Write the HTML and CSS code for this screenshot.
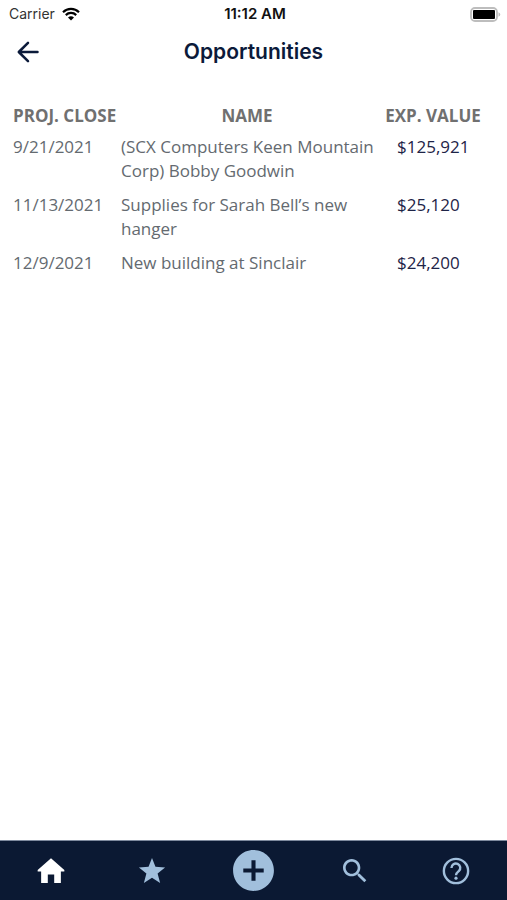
FILE: index.html
```html
<!DOCTYPE html>
<html lang="en">
<head>
<meta charset="utf-8">
<meta name="viewport" content="width=device-width, initial-scale=1">
<title>Opportunities</title>
<link rel="stylesheet" href="styles.css">
</head>
<body>
<div class="status">
  <div class="carrier">
    <span>Carrier</span>
    <svg class="wifi" viewBox="0 0 18 14" aria-hidden="true">
      <path d="M1 5.2a11.5 11.5 0 0 1 16 0M3.8 8.1a7.4 7.4 0 0 1 10.4 0" fill="none" stroke="currentColor" stroke-width="2.2"/>
      <path d="M9 13.6 6 10.6a4.3 4.3 0 0 1 6 0z" fill="currentColor"/>
    </svg>
  </div>
  <time class="clock">11:12 AM</time>
  <svg class="battery" viewBox="0 0 31 15" aria-hidden="true">
    <rect x="1" y="1" width="26" height="13" rx="4" fill="#fff" stroke="#bdbdbd" stroke-width="1.8"/>
    <rect x="3" y="3" width="22" height="9" rx="1" fill="#000"/>
    <path d="M28.5 5.2c2.4 1.2 2.4 3.4 0 4.6z" fill="#bdbdbd"/>
  </svg>
</div>
<header class="header">
  <button class="back" type="button" aria-label="Back">
    <svg viewBox="0 0 24 24" aria-hidden="true"><path d="M21.5 12H3M12 2.8 2.8 12l9.2 9.2" fill="none" stroke="currentColor" stroke-width="2.5" stroke-linecap="round" stroke-linejoin="round"/></svg>
  </button>
  <h1 class="title">Opportunities</h1>
</header>
<main class="content">
  <table class="deals">
    <colgroup><col class="col-date"><col><col class="col-value"></colgroup>
    <thead>
      <tr><th class="date" scope="col">PROJ. CLOSE</th><th class="name" scope="col">NAME</th><th scope="col">EXP. VALUE</th></tr>
    </thead>
    <tbody>
      <tr><td>9/21/2021</td><td>(SCX Computers Keen Mountain Corp) Bobby Goodwin</td><td class="value">$125,921</td></tr>
      <tr><td>11/13/2021</td><td>Supplies for Sarah Bell’s new hanger</td><td class="value">$25,120</td></tr>
      <tr><td>12/9/2021</td><td>New building at Sinclair</td><td class="value">$24,200</td></tr>
    </tbody>
  </table>
</main>
<nav class="tabs">
  <a class="tab active" href="#home" aria-label="Home"><svg viewBox="0 0 24 24"><path d="M12 2.4 2 11.2v1.2h2.6V21h5v-6.4h4.8V21h5v-8.6H22v-1.2z"/></svg></a>
  <a class="tab" href="#favorites" aria-label="Favorites"><svg viewBox="0 0 24 24"><path d="M12 2.2l2.6 6.7 7.2.4-5.6 4.6 1.9 7.1-6.1-4-6.1 4 1.9-7.1-5.6-4.6 7.2-.4z"/></svg></a>
  <a class="tab add" href="#add" aria-label="Add"><svg viewBox="0 0 24 24"><path d="M12 2C6.48 2 2 6.48 2 12s4.48 10 10 10 10-4.48 10-10S17.52 2 12 2zm5 11h-4v4h-2v-4H7v-2h4V7h2v4h4v2z"/></svg></a>
  <a class="tab" href="#search" aria-label="Search"><svg viewBox="0 0 24 24"><path d="M15.5 14h-.79l-.28-.27C15.41 12.59 16 11.11 16 9.5 16 5.91 13.09 3 9.5 3S3 5.91 3 9.5 5.91 16 9.5 16c1.61 0 3.09-.59 4.23-1.57l.27.28v.79l5 4.99L20.49 19l-4.99-5zm-6 0C7.01 14 5 11.99 5 9.5S7.01 5 9.5 5 14 7.01 14 9.5 11.99 14 9.5 14z"/></svg></a>
  <a class="tab" href="#help" aria-label="Help"><svg viewBox="0 0 24 24"><circle cx="12" cy="12" r="9.1" fill="none" stroke="currentColor" stroke-width="1.8"/><path d="M8.6 9.7a3.3 3.3 0 1 1 5.5 2.4c-1.1 1-2.1 1.4-2.1 3" fill="none" stroke="currentColor" stroke-width="1.8"/><circle cx="12" cy="17.4" r="1.2"/></svg></a>
</nav>
</body>
</html>
```
FILE: styles.css
```css
* {
  box-sizing: border-box;
}

body {
  margin: 0;
  min-height: 100vh;
  display: flex;
  flex-direction: column;
  background: #fff;
  color: #646a70;
  font-family: "Open Sans", sans-serif;
  font-size: 17px;
  line-height: 24px;
}

.status {
  display: grid;
  grid-template-columns: 1fr auto 1fr;
  align-items: center;
  height: 28px;
  padding: 0 6px 0 9px;
  color: #111;
  font-family: Inter, sans-serif;
  font-size: 14px;
}

.carrier {
  display: flex;
  align-items: center;
  gap: 7px;
  color: #333;
}

.wifi {
  width: 18px;
  height: 14px;
  color: #000;
}

.clock {
  font-size: 15px;
  font-weight: 600;
}

.battery {
  width: 31px;
  height: 15px;
  justify-self: end;
}

.header {
  display: grid;
  grid-template-columns: 48px 1fr 48px;
  align-items: center;
  height: 48px;
  color: #0b1a3a;
}

.back {
  display: flex;
  padding: 0 0 0 16px;
  border: 0;
  background: none;
  color: inherit;
}

.back svg {
  width: 24px;
  height: 24px;
}

.title {
  margin: 0;
  text-align: center;
  font-family: Inter, sans-serif;
  font-size: 21px;
  font-weight: 600;
}

.content {
  flex: 1;
  padding: 26px 26px 0 13px;
}

.deals {
  width: 100%;
  table-layout: fixed;
  border-collapse: collapse;
}

.col-date {
  width: 108px;
}

.col-value {
  width: 96px;
}

.deals th {
  padding: 2px 0 4px;
  color: #707070;
  font-weight: 700;
  white-space: nowrap;
}

.deals .date {
  text-align: left;
}

.deals .name {
  padding-right: 12px;
}

.deals td {
  padding: 3px 0 7px;
  vertical-align: top;
}

.deals .value {
  padding-left: 12px;
  color: #1e2447;
}

.tabs {
  display: flex;
  height: 60px;
  border-top: 1px solid #7e8a9e;
  background: #0b1933;
}

.tab {
  flex: 1;
  display: flex;
  align-items: center;
  justify-content: center;
  color: #a1bfdc;
}

.tab svg {
  width: 32px;
  height: 32px;
  fill: currentColor;
}

.tab.active {
  color: #fff;
}

.add svg {
  width: 49px;
  height: 49px;
}
```
